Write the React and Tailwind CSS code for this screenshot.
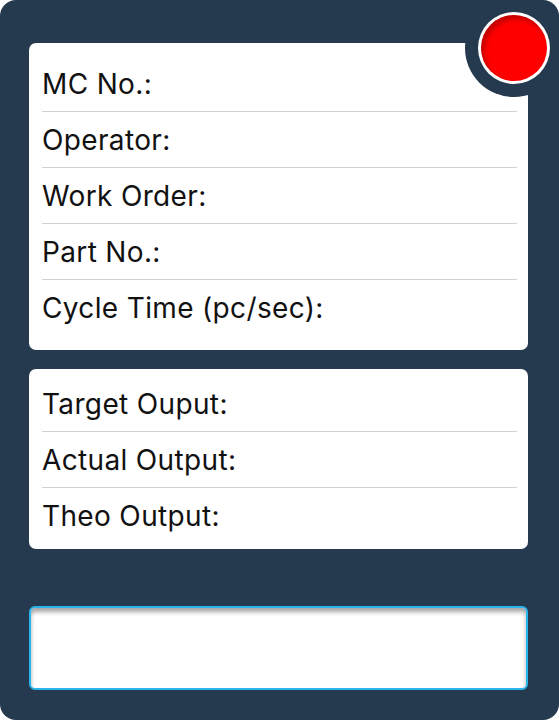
import React from "react";

function Row({ label, last }) {
  return (
    <div className={"h-[56px] flex items-center " + (last ? "" : "border-b border-[#d2d2d2]")}>
      <span className="text-[28px] tracking-[0.35px] text-[#111] leading-none">{label}</span>
    </div>
  );
}

export default function App() {
  return (
    <div className="w-[559px] h-[720px] bg-white" style={{ fontFamily: "Inter, 'Noto Sans', sans-serif" }}>
      <div className="relative w-[559px] h-[720px] rounded-[16px] bg-[#253a4f] pl-[29px] pr-[31px] pt-[43px] flex flex-col">
        <div className="bg-white rounded-[7px] pl-[13px] pr-[11px] pt-[13px] pb-[14px]">
          <Row label="MC No.:" />
          <Row label="Operator:" />
          <Row label="Work Order:" />
          <Row label="Part No.:" />
          <Row label="Cycle Time (pc/sec):" last />
        </div>
        <div className="mt-[19px] bg-white rounded-[7px] pl-[13px] pr-[11px] pt-[7px] pb-[5px]">
          <Row label="Target Ouput:" />
          <Row label="Actual Output:" />
          <Row label="Theo Output:" last />
        </div>
        <div className="mt-[57px] h-[84px] bg-white rounded-[6px] border-2 border-[#29b5ec] shadow-[inset_0_4px_4px_rgba(0,0,0,0.35)]"></div>

        <div className="absolute left-[465px] top-[-1px] w-[98px] h-[98px] rounded-full bg-[#253a4f]"></div>
        <div className="absolute left-[478px] top-[12px] w-[72px] h-[72px] rounded-full bg-white p-[3px]">
          <div className="w-full h-full rounded-full bg-[#ff0000] shadow-[inset_3px_4px_5px_rgba(120,0,0,0.45)]"></div>
        </div>
      </div>
    </div>
  );
}
